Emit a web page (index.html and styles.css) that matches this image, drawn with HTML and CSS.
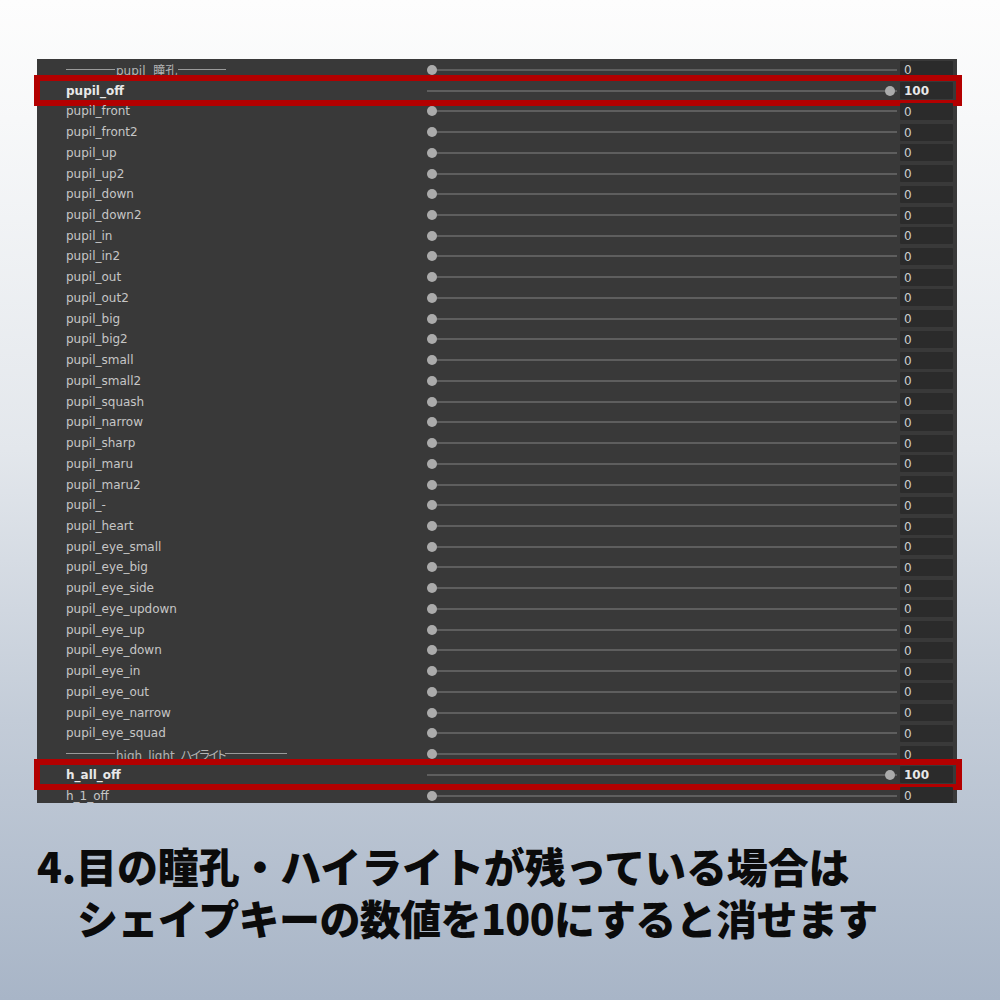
FILE: index.html
```html
<!DOCTYPE html>
<html lang="ja">
<head>
<meta charset="utf-8">
<title>Shape Keys</title>
<link rel="stylesheet" href="styles.css">
</head>
<body>
<div class="page">
  <div class="panel">
    <div class="row sep">
      <div class="label"><span class="rule r1"></span><span class="sep-text">pupil&nbsp;&nbsp;瞳孔</span><span class="rule r2"></span></div>
      <div class="slider"><span class="track"></span><span class="knob"></span></div>
      <div class="num">0</div>
    </div>
    <div class="row on">
      <div class="label">pupil_off</div>
      <div class="slider"><span class="track"></span><span class="knob full"></span></div>
      <div class="num">100</div>
      <span class="mark"></span>
    </div>
    <div class="row"><div class="label">pupil_front</div><div class="slider"><span class="track"></span><span class="knob"></span></div><div class="num">0</div></div>
    <div class="row"><div class="label">pupil_front2</div><div class="slider"><span class="track"></span><span class="knob"></span></div><div class="num">0</div></div>
    <div class="row"><div class="label">pupil_up</div><div class="slider"><span class="track"></span><span class="knob"></span></div><div class="num">0</div></div>
    <div class="row"><div class="label">pupil_up2</div><div class="slider"><span class="track"></span><span class="knob"></span></div><div class="num">0</div></div>
    <div class="row"><div class="label">pupil_down</div><div class="slider"><span class="track"></span><span class="knob"></span></div><div class="num">0</div></div>
    <div class="row"><div class="label">pupil_down2</div><div class="slider"><span class="track"></span><span class="knob"></span></div><div class="num">0</div></div>
    <div class="row"><div class="label">pupil_in</div><div class="slider"><span class="track"></span><span class="knob"></span></div><div class="num">0</div></div>
    <div class="row"><div class="label">pupil_in2</div><div class="slider"><span class="track"></span><span class="knob"></span></div><div class="num">0</div></div>
    <div class="row"><div class="label">pupil_out</div><div class="slider"><span class="track"></span><span class="knob"></span></div><div class="num">0</div></div>
    <div class="row"><div class="label">pupil_out2</div><div class="slider"><span class="track"></span><span class="knob"></span></div><div class="num">0</div></div>
    <div class="row"><div class="label">pupil_big</div><div class="slider"><span class="track"></span><span class="knob"></span></div><div class="num">0</div></div>
    <div class="row"><div class="label">pupil_big2</div><div class="slider"><span class="track"></span><span class="knob"></span></div><div class="num">0</div></div>
    <div class="row"><div class="label">pupil_small</div><div class="slider"><span class="track"></span><span class="knob"></span></div><div class="num">0</div></div>
    <div class="row"><div class="label">pupil_small2</div><div class="slider"><span class="track"></span><span class="knob"></span></div><div class="num">0</div></div>
    <div class="row"><div class="label">pupil_squash</div><div class="slider"><span class="track"></span><span class="knob"></span></div><div class="num">0</div></div>
    <div class="row"><div class="label">pupil_narrow</div><div class="slider"><span class="track"></span><span class="knob"></span></div><div class="num">0</div></div>
    <div class="row"><div class="label">pupil_sharp</div><div class="slider"><span class="track"></span><span class="knob"></span></div><div class="num">0</div></div>
    <div class="row"><div class="label">pupil_maru</div><div class="slider"><span class="track"></span><span class="knob"></span></div><div class="num">0</div></div>
    <div class="row"><div class="label">pupil_maru2</div><div class="slider"><span class="track"></span><span class="knob"></span></div><div class="num">0</div></div>
    <div class="row"><div class="label">pupil_-</div><div class="slider"><span class="track"></span><span class="knob"></span></div><div class="num">0</div></div>
    <div class="row"><div class="label">pupil_heart</div><div class="slider"><span class="track"></span><span class="knob"></span></div><div class="num">0</div></div>
    <div class="row"><div class="label">pupil_eye_small</div><div class="slider"><span class="track"></span><span class="knob"></span></div><div class="num">0</div></div>
    <div class="row"><div class="label">pupil_eye_big</div><div class="slider"><span class="track"></span><span class="knob"></span></div><div class="num">0</div></div>
    <div class="row"><div class="label">pupil_eye_side</div><div class="slider"><span class="track"></span><span class="knob"></span></div><div class="num">0</div></div>
    <div class="row"><div class="label">pupil_eye_updown</div><div class="slider"><span class="track"></span><span class="knob"></span></div><div class="num">0</div></div>
    <div class="row"><div class="label">pupil_eye_up</div><div class="slider"><span class="track"></span><span class="knob"></span></div><div class="num">0</div></div>
    <div class="row"><div class="label">pupil_eye_down</div><div class="slider"><span class="track"></span><span class="knob"></span></div><div class="num">0</div></div>
    <div class="row"><div class="label">pupil_eye_in</div><div class="slider"><span class="track"></span><span class="knob"></span></div><div class="num">0</div></div>
    <div class="row"><div class="label">pupil_eye_out</div><div class="slider"><span class="track"></span><span class="knob"></span></div><div class="num">0</div></div>
    <div class="row"><div class="label">pupil_eye_narrow</div><div class="slider"><span class="track"></span><span class="knob"></span></div><div class="num">0</div></div>
    <div class="row"><div class="label">pupil_eye_squad</div><div class="slider"><span class="track"></span><span class="knob"></span></div><div class="num">0</div></div>
    <div class="row sep">
      <div class="label"><span class="rule r1"></span><span class="sep-text">high_light_<span class="kana">ハイライト</span></span><span class="rule r3"></span></div>
      <div class="slider"><span class="track"></span><span class="knob"></span></div>
      <div class="num">0</div>
    </div>
    <div class="row on">
      <div class="label">h_all_off</div>
      <div class="slider"><span class="track"></span><span class="knob full"></span></div>
      <div class="num">100</div>
      <span class="mark"></span>
    </div>
    <div class="row"><div class="label">h_1_off</div><div class="slider"><span class="track"></span><span class="knob"></span></div><div class="num">0</div></div>
  </div>

  <div class="caption">
    <p class="line first">4.目の瞳孔・ハイライトが残っている場合は</p>
    <p class="line second">シェイプキーの数値を100にすると消せます</p>
  </div>
</div>
</body>
</html>
```

FILE: styles.css
```css
html, body {
  margin: 0;
  padding: 0;
}

body {
  width: 1000px;
  height: 1000px;
  overflow: hidden;
  background: linear-gradient(180deg, #fdfdfd 0%, #f7f8f9 12%, #e3e7ec 45%, #c3ccd8 72%, #a8b5c7 100%);
}

.page {
  padding-top: 59px;
}

/* shape key list; rows below the bottom edge are cut off,
   the row frames may stick out at the sides */
.panel {
  margin-left: 37px;
  width: 920px;
  height: 744px;
  background: #393939;
  padding-top: 0.5px;
  box-sizing: border-box;
  clip-path: inset(-20px -20px 0 -20px);
  font-family: "DejaVu Sans", "Noto Sans CJK JP", sans-serif;
  font-size: 12px;
  color: #c6c6c6;
}

.row {
  position: relative;
  display: flex;
  align-items: center;
  height: 20.74px;
}

.label {
  width: 390px;
  padding-left: 29px;
  box-sizing: border-box;
  white-space: nowrap;
  display: flex;
  align-items: center;
}

.sep .label {
  color: #b4b4b4;
}

.rule {
  display: block;
  height: 1px;
  background: #9a9a9a;
  margin-top: -1px;
}

.r1 { width: 49px; }
.r2 { width: 48px; margin-left: 1px; }
.r3 { width: 62px; }

.sep-text {
  padding-left: 1px;
}

.kana {
  font-feature-settings: "palt";
  letter-spacing: -1.6px;
}

.slider {
  position: relative;
  width: 470px;
  height: 100%;
}

.track {
  position: absolute;
  left: 0;
  right: 0;
  top: 50%;
  height: 2px;
  margin-top: -1px;
  background: #5e5e5e;
}

.knob {
  position: absolute;
  top: 50%;
  left: 0;
  width: 10px;
  height: 10px;
  margin-top: -5px;
  border-radius: 50%;
  background: #ababab;
}

.knob.full {
  left: 458px;
}

.num {
  width: 53px;
  height: 17px;
  margin-left: 3px;
  background: #2b2b2b;
  border-radius: 1px;
  box-sizing: border-box;
  padding-left: 4px;
  line-height: 18px;
  color: #cfcfcf;
}

.on .label,
.on .num {
  font-weight: bold;
  color: #e8e8e8;
}

/* red highlight frame around a row */
.mark {
  position: absolute;
  left: -3px;
  right: -5px;
  top: -5px;
  height: 31px;
  border: 6px solid #b30000;
  box-sizing: border-box;
  pointer-events: none;
}

.caption {
  padding: 36px 0 0 37px;
  font-family: "Noto Sans CJK JP", sans-serif;
  font-weight: 900;
  font-size: 41px;
  color: #0b0b0b;
}

.line {
  margin: 0;
  height: 52px;
  line-height: 52px;
  white-space: nowrap;
}

.first {
  letter-spacing: -0.15px;
}

.second {
  padding-left: 40px;
  letter-spacing: -0.6px;
}
```
